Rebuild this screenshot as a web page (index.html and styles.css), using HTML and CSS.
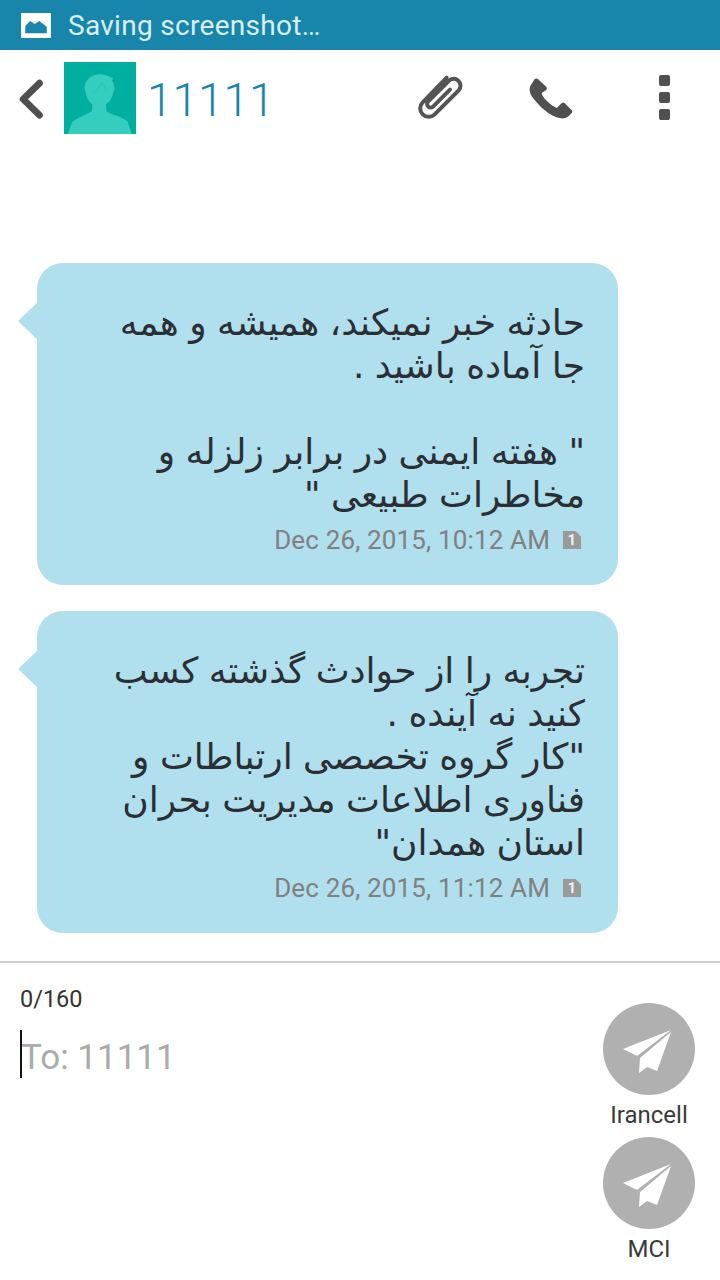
FILE: index.html
```html
<!DOCTYPE html>
<html lang="en">
<head>
  <meta charset="UTF-8" />
  <meta name="viewport" content="width=device-width, initial-scale=1" />
  <title>11111</title>
  <link rel="stylesheet" href="styles.css">
</head>
<body>
  <div class="app">
    <div class="status">
      <svg class="status-icon" viewBox="62 33 92 75" preserveAspectRatio="none">
        <rect x="62" y="33" width="92" height="75" rx="3" fill="#fff"/>
        <path d="M75 94V72l15-15 14 9 14-9 23 17v20z" fill="#1885ab"/>
      </svg>
      <span class="status-text">Saving screenshot…</span>
    </div>

    <header class="topbar">
      <svg class="back" viewBox="50 230 80 126">
        <path d="M116 246 66 295l50 49" fill="none" stroke="#505050" stroke-width="21" stroke-linecap="round" stroke-linejoin="round"/>
      </svg>
      <svg class="avatar" viewBox="192 186 216 216">
        <rect x="192" y="186" width="216" height="216" fill="#00afa0"/>
        <path d="M254 270c-2-28 18-46 44-47 12 0 24 3 32 8l10 4-5 6c7 9 9 20 8 30l-3 4c-2 16-10 30-22 38l1 20c16 12 50 18 64 32l12 37H204l12-35c14-14 44-22 60-34l1-20c-12-8-18-22-20-38z" fill="#35cdbe"/>
        <path d="M278 280c12-8 22-20 28-32l14 22" fill="none" stroke="#22bdae" stroke-width="2"/>
      </svg>
      <div class="name">11111</div>
      <div class="actions">
        <svg class="clip" viewBox="45 40 150 150">
          <path d="M140 54 68 128a24 24 0 0 0 36 36l72-72a19 19 0 0 0-30-28l-62 62a10 10 0 0 0 16 14l50-50" fill="none" stroke="#555" stroke-width="12" stroke-linecap="round"/>
        </svg>
        <svg class="call" viewBox="385 50 140 135">
          <path d="M404 60c3-3 8-3 11 0l24 22c3 3 3 7 0 10l-14 10c8 20 28 36 46 44l14-14c4-3 7-3 10 0l20 20c3 3 3 7 0 10l-8 8c-6 6-14 8-24 7-36-8-62-34-84-62-10-14-12-26-7-36z" fill="#505050"/>
        </svg>
        <div class="dots"><i></i><i></i><i></i></div>
      </div>
    </header>

    <main class="thread">
      <div class="bubble">
        <p class="msg" dir="rtl">حادثه خبر نمیکند، همیشه و همه<br>جا آماده باشید .<br><br>" هفته ایمنی در برابر زلزله و<br>مخاطرات طبیعی "</p>
        <div class="meta"><span>Dec 26, 2015, 10:12 AM</span><span class="sim">1</span></div>
      </div>
      <div class="bubble">
        <p class="msg" dir="rtl">تجربه را از حوادث گذشته کسب<br>کنید نه آینده .<br>"کار گروه تخصصی ارتباطات و<br>فناوری اطلاعات مدیریت بحران<br>استان همدان"</p>
        <div class="meta"><span>Dec 26, 2015, 11:12 AM</span><span class="sim">1</span></div>
      </div>
    </main>

    <footer class="composer">
      <div class="input">
        <div class="counter">0/160</div>
        <div class="to"><span class="caret"></span>To: 11111</div>
      </div>
      <div class="senders">
        <div class="sender">
          <svg class="send" viewBox="0 0 92 92">
            <circle cx="46" cy="46" r="46" fill="#b0b0b0"/>
            <path d="M68 27 20 46l14 7zM68 29 37 55l-1 15 8-6 10 4z" fill="#fff"/>
          </svg>
          <span>Irancell</span>
        </div>
        <div class="sender">
          <svg class="send" viewBox="0 0 92 92">
            <circle cx="46" cy="46" r="46" fill="#b0b0b0"/>
            <path d="M68 27 20 46l14 7zM68 29 37 55l-1 15 8-6 10 4z" fill="#fff"/>
          </svg>
          <span>MCI</span>
        </div>
      </div>
    </footer>
  </div>
</body>
</html>
```

FILE: styles.css
```css
* { box-sizing: border-box; }

html, body {
  margin: 0;
  background: #fff;
}

body {
  font-family: Roboto, sans-serif;
  color: #333;
}

.app {
  width: 720px;
  height: 1280px;
  display: flex;
  flex-direction: column;
  overflow: hidden;
}

/* status bar */
.status {
  height: 50px;
  flex: none;
  background: #1885ab;
  display: flex;
  align-items: center;
  padding-left: 21px;
  gap: 17px;
}

.status-icon {
  width: 30px;
  height: 25px;
}

.status-text {
  font-size: 28px;
  letter-spacing: 0.3px;
  color: #d9eef5;
}

/* contact header */
.topbar {
  height: 96px;
  flex: none;
  display: flex;
  align-items: flex-start;
  padding: 12px 0 0 18px;
}

.back {
  width: 26px;
  height: 41px;
  margin-top: 16px;
}

.avatar {
  width: 72px;
  height: 72px;
  margin-left: 20px;
}

.name {
  font-size: 46px;
  line-height: 76px;
  font-weight: 300;
  color: #1885ab;
  margin-left: 11px;
}

.actions {
  margin-left: auto;
  display: flex;
  align-items: flex-start;
  padding-right: 50px;
}

.clip {
  width: 50px;
  height: 50px;
  margin-top: 11px;
}

.call {
  width: 47px;
  height: 45px;
  margin: 14px 0 0 63px;
}

.dots {
  display: flex;
  flex-direction: column;
  gap: 6px;
  margin: 13px 0 0 84px;
}

.dots i {
  display: block;
  width: 11px;
  height: 11px;
  border-radius: 2px;
  background: #505050;
}

/* messages */
.thread {
  flex: 1;
  display: flex;
  flex-direction: column;
  gap: 26px;
  padding: 117px 0 0 37px;
}

.bubble {
  position: relative;
  width: 581px;
  background: #b0dfee;
  border-radius: 26px;
  padding: 38px 33px 30px 40px;
}

.bubble::before {
  content: "";
  position: absolute;
  left: -19px;
  top: 40px;
  width: 19px;
  height: 36px;
  background: #b0dfee;
  clip-path: polygon(100% 0, 0 50%, 100% 100%);
}

.msg {
  margin: 0;
  font-family: "DejaVu Sans", sans-serif;
  font-size: 36px;
  line-height: 43px;
  word-spacing: -1px;
  white-space: nowrap;
  color: #2b2f33;
}

.meta {
  display: flex;
  justify-content: flex-end;
  align-items: center;
  gap: 13px;
  margin-top: 9px;
  height: 30px;
  font-size: 26px;
  letter-spacing: 0.15px;
  color: #808080;
}

.sim {
  width: 18px;
  height: 18px;
  margin-right: 4px;
  background: #9a9a9a;
  color: #e8f5f9;
  font-size: 15px;
  font-weight: 700;
  line-height: 18px;
  text-align: center;
  clip-path: polygon(0 0, 70% 0, 100% 30%, 100% 100%, 0 100%);
}

/* compose box */
.composer {
  height: 319px;
  flex: none;
  border-top: 2px solid #cfcfcf;
  display: flex;
  justify-content: space-between;
}

.input {
  padding: 22px 0 0 20px;
}

.counter {
  font-size: 23.5px;
  line-height: 28px;
  color: #333;
}

.to {
  position: relative;
  margin-top: 17px;
  font-size: 35px;
  line-height: 48px;
  color: #ababab;
  padding: 4px 0 0 1px;
}

.caret {
  position: absolute;
  left: 0;
  top: 0;
  width: 2px;
  height: 48px;
  background: #111;
}

.senders {
  width: 92px;
  margin: 40px 25px 0 0;
  display: flex;
  flex-direction: column;
  gap: 2px;
}

.sender {
  display: flex;
  flex-direction: column;
  align-items: center;
  font-size: 24px;
  line-height: 40px;
  color: #3a3a3a;
  white-space: nowrap;
}

.send {
  width: 92px;
  height: 92px;
  flex: none;
}
```
